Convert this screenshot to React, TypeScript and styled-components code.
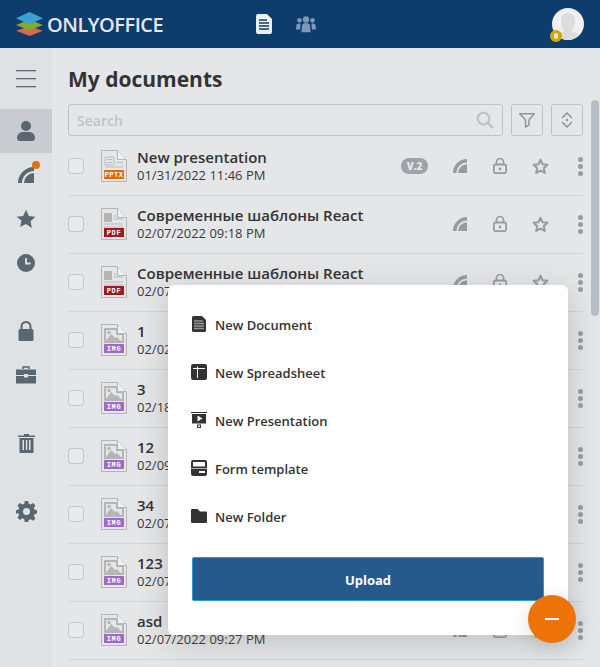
import React from "react";
import styled, { createGlobalStyle } from "styled-components";

const Global = createGlobalStyle`
  html, body { margin: 0; padding: 0; height: 100%; overflow: hidden; background: #e5e6e8; }
  * { box-sizing: border-box; }
  body { font-family: "Open Sans", "Liberation Sans", sans-serif; }
`;

const Page = styled.div`
  position: relative;
  width: 600px;
  height: 667px;
  display: flex;
  flex-direction: column;
  overflow: hidden;
  background: #e5e6e8;
`;
const Header = styled.header`
  height: 48px;
  flex: none;
  background: #0e3c6c;
  display: flex;
  align-items: center;
  padding: 0 16px;
`;
const Brand = styled.div`
  width: 185px;
  display: flex;
  align-items: center;
  gap: 4px;
`;
const BrandName = styled.span`
  font-size: 20px;
  font-weight: 600;
  letter-spacing: -0.5px;
  color: #e4e8ec;
`;
const HeaderNav = styled.nav`
  display: flex;
  align-items: center;
  gap: 20px;
  margin-left: 52px;
`;
const NavIcon = styled.span`
  display: flex;
  width: 22px;
  justify-content: center;
`;
const Avatar = styled.div`
  position: relative;
  margin-left: auto;
  width: 32px;
  height: 32px;
  border-radius: 50%;
  background: #f0f0f0;
`;
const AvatarBadge = styled.span`
  position: absolute;
  left: -2px;
  bottom: -2px;
  width: 12px;
  height: 12px;
  border-radius: 50%;
  background: #d2a800;
  display: flex;
  align-items: center;
  justify-content: center;
  &::after {
    content: "";
    width: 4px;
    height: 6px;
    border-radius: 2px;
    background: #f6efc8;
  }
`;
const Body = styled.div`
  flex: 1;
  display: flex;
  min-height: 0;
`;
const Sidebar = styled.aside`
  width: 52px;
  flex: none;
  background: #dfe2e5;
  display: flex;
  flex-direction: column;
`;
const Burger = styled.div`
  height: 61px;
  display: flex;
  flex-direction: column;
  align-items: center;
  justify-content: center;
  gap: 7px;
  & > span {
    width: 20px;
    height: 1px;
    background: #5f6a74;
    box-shadow: 0 0.5px 0 #8b949c;
  }
`;
const SideItem = styled.div<{ $active?: boolean; $gap?: number }>`
  position: relative;
  height: 44px;
  flex: none;
  margin-top: ${(p) => p.$gap ?? 0}px;
  display: flex;
  align-items: center;
  justify-content: center;
  background: ${(p) => (p.$active ? "#c8ccd0" : "transparent")};
`;
const Dot = styled.span`
  position: absolute;
  top: 8px;
  left: 32px;
  width: 8px;
  height: 8px;
  border-radius: 50%;
  background: #e0720f;
`;
const Main = styled.main`
  flex: 1;
  min-width: 0;
  padding: 0 17px 0 16px;
  display: flex;
  flex-direction: column;
`;
const Title = styled.h1`
  margin: 0;
  height: 56px;
  display: flex;
  align-items: center;
  padding-top: 6px;
  font-size: 21px;
  font-weight: 700;
  color: #333;
`;
const Toolbar = styled.div`
  display: flex;
  gap: 8px;
  height: 32px;
  flex: none;
`;
const SearchBox = styled.div`
  flex: 1;
  border: 1px solid #bcc3cc;
  border-radius: 3px;
  display: flex;
  align-items: center;
  justify-content: space-between;
  padding: 0 8px;
  font-size: 14px;
  font-weight: 600;
  color: #c0c4ca;
`;
const ToolButton = styled.div`
  width: 32px;
  border: 1px solid #bcc3cc;
  border-radius: 3px;
  display: flex;
  align-items: center;
  justify-content: center;
`;
const List = styled.div`
  margin-top: 2px;
  display: flex;
  flex-direction: column;
`;
const Row = styled.div`
  height: 58px;
  flex: none;
  display: flex;
  align-items: center;
  padding-bottom: 1px;
  border-bottom: 1px solid #d4d6d9;
`;
const Check = styled.span`
  width: 16px;
  height: 16px;
  border: 1px solid #c3c9d0;
  border-radius: 3px;
  background: #e8e9eb;
  flex: none;
`;
const FileBox = styled.div`
  width: 26px;
  margin-left: 17px;
  flex: none;
  display: flex;
`;
const Info = styled.div`
  margin-left: 10px;
  flex: 1;
  min-width: 0;
  padding-bottom: 1px;
  color: #333;
`;
const FileName = styled.div`
  font-size: 15px;
  line-height: 18px;
  font-weight: 600;
  white-space: nowrap;
`;
const FileDate = styled.div`
  margin-top: 1px;
  font-size: 13px;
  line-height: 17px;
  color: #3a3a3a;
  white-space: nowrap;
`;
const Badge = styled.span`
  width: 27px;
  height: 16px;
  border-radius: 8px;
  background: #9da3a9;
  color: #e5e6e8;
  font-size: 10px;
  font-weight: 800;
  display: flex;
  align-items: center;
  justify-content: center;
  margin-right: 12px;
  flex: none;
`;
const Action = styled.span`
  width: 40px;
  flex: none;
  display: flex;
  justify-content: center;
  align-items: center;
`;
const Dots = styled.span`
  width: 23px;
  flex: none;
  display: flex;
  flex-direction: column;
  align-items: flex-end;
  gap: 2px;
  & > i {
    width: 5px;
    height: 5px;
    border-radius: 50%;
    background: #969ca3;
  }
`;
const Scrollbar = styled.div`
  position: absolute;
  top: 100px;
  right: 1px;
  width: 8px;
  height: 216px;
  border-radius: 4px;
  background: #b7bec6;
`;
const Popup = styled.div`
  position: absolute;
  left: 168px;
  top: 285px;
  width: 400px;
  height: 350px;
  background: #fff;
  border-radius: 6px;
  padding: 16px 24px 0;
  box-shadow: 0 7px 30px rgba(85, 85, 85, 0.25);
`;
const MenuItem = styled.div`
  height: 48px;
  display: flex;
  align-items: center;
  gap: 8px;
  font-size: 13px;
  font-weight: 600;
  color: #333;
`;
const MenuIcon = styled.span`
  width: 16px;
  display: flex;
  justify-content: center;
  margin-left: -1px;
  position: relative;
  top: -1px;
`;
const Upload = styled.div`
  margin-top: 16px;
  height: 44px;
  padding-top: 1px;
  background: #265a8c;
  border: 1px solid #2a9ad6;
  border-radius: 2px;
  color: #fff;
  font-size: 13px;
  font-weight: 700;
  display: flex;
  align-items: center;
  justify-content: center;
`;
const Fab = styled.div`
  position: absolute;
  left: 528px;
  top: 595px;
  width: 48px;
  height: 48px;
  border-radius: 50%;
  background: #ed7309;
  box-shadow: 0 5px 20px rgba(0, 0, 0, 0.13);
  display: flex;
  align-items: center;
  justify-content: center;
  &::after {
    content: "";
    width: 14px;
    height: 2px;
    background: #fff;
  }
`;

const G = "#5a6771";
const Person = () => (
  <svg width="18" height="20" viewBox="0 0 18 20"><circle cx="9" cy="5" r="5" fill={G} /><path d="M0 17c0-4 3-6 6-6h6c3 0 6 2 6 6 0 2-1 3-3 3H3c-2 0-3-1-3-3z" fill={G} /></svg>
);
const Feed = ({ c = G, s = 16 }: { c?: string; s?: number }) => (
  <svg width={s} height={s} viewBox="0 0 16 16">
    <path d="M0 16A16 16 0 0 1 16 0V4A12 12 0 0 0 4 16Z" fill={c} />
    <path d="M6 16A10 10 0 0 1 16 6V16Z" fill={c} />
  </svg>
);
const Star = () => (
  <svg width="20" height="20" viewBox="0 0 24 24"><path d="M12 1l3.400 7.300 7.900 1-5.800 5.500 1.500 7.900L12 18l-7 3.700 1.500-7.900L.7 9.300l7.900-1z" fill={G} /></svg>
);
const Clock = () => (
  <svg width="18" height="18" viewBox="0 0 18 18"><circle cx="9" cy="9" r="9" fill={G} /><path d="M9 4v5.500h4.500" stroke="#dfe2e5" strokeWidth="1.800" fill="none" /></svg>
);
const Lock = () => (
  <svg width="16" height="20" viewBox="0 0 16 20"><path d="M3.500 9V5.500a4.500 4.500 0 0 1 9 0V9" stroke={G} strokeWidth="2" fill="none" /><rect x="0.500" y="8" width="15" height="12" rx="1.500" fill={G} /></svg>
);
const Case = () => (
  <svg width="20" height="18" viewBox="0 0 20 18"><path d="M7 3V1h6v2" stroke={G} strokeWidth="1.500" fill="none" /><path d="M0 3.500h20V9h-8v-1H8v1H0zM0 10h8v1.500h4V10h8v7.500H0z" fill={G} /></svg>
);
const Trash = () => (
  <svg width="17" height="20" viewBox="0 0 17 20"><path d="M6 1h5v1.500h6V4H0V2.500h6z" fill={G} /><path d="M1.500 5h14v15h-14zM4.500 7v10h1.500V7zM7.800 7v10h1.500V7zM11 7v10h1.500V7z" fill={G} fillRule="evenodd" /></svg>
);
const Gear = () => (
  <svg width="21" height="21" viewBox="0 0 24 24"><path fillRule="evenodd" fill={G} d="M10 0h4l.6 3.200 2.200.9L19.500 2.300 22.300 5l-1.900 2.700.9 2.200L24 10.500v3.900l-2.700.6-.9 2.200 1.900 2.700-2.800 2.800-2.700-1.900-2.200.9L14 24h-4l-.6-3.300-2.200-.9-2.700 1.900-2.800-2.800 1.900-2.700-.9-2.200L0 14.400v-3.900l2.700-.6.900-2.200L1.700 5l2.800-2.700 2.700 1.800 2.200-.9zM12 8a4 4 0 1 0 0 8 4 4 0 0 0 0-8z" /></svg>
);

const Logo = () => (
  <svg width="27" height="24" viewBox="0 0 27 24">
    <path d="M13.500 14.500L0 18.800l13.500 5.200L27 18.800z" fill="#d9694a" />
    <path d="M13.500 7.500L0 13l13.500 5.500L27 13z" fill="#7faa2e" />
    <path d="M13.500 0L0 6.200l13.500 6 13.500-6z" fill="#3aa0d5" />
  </svg>
);
const DocWhite = () => (
  <svg width="16" height="20" viewBox="0 0 16 20">
    <path d="M2 0h9l5 5v13a2 2 0 0 1-2 2H2a2 2 0 0 1-2-2V2a2 2 0 0 1 2-2z" fill="#eef1f4" />
    <path d="M3 6h8M3 9h10M3 12h10M3 15h10" stroke="#0e3c6c" strokeWidth="1.400" />
  </svg>
);
const People = () => (
  <svg width="20" height="18" viewBox="0 0 22 18" fill="#7d99b6">
    <circle cx="11" cy="4" r="3.500" /><circle cx="3.800" cy="5" r="2.500" /><circle cx="18.200" cy="5" r="2.500" />
    <path d="M6 18l.6-7c.2-2 2-3 4.400-3s4.200 1 4.400 3l.6 7z" />
    <path d="M0 15l.4-4.500C.6 9 2 8 4.500 8.500 5 9 5 10 4.900 11l-.4 4zM22 15l-.4-4.500C21.400 9 20 8 17.500 8.500 17 9 17 10 17.100 11l.4 4z" />
  </svg>
);
const Silhouette = () => (
  <svg width="32" height="32" viewBox="0 0 32 32">
    <defs><clipPath id="av"><circle cx="16" cy="16" r="16" /></clipPath></defs>
    <g clipPath="url(#av)"><path d="M16 5c4 0 7 3 7 8s-2 7-3 9c0 2 4 3 8 5v5H4v-5c4-2 8-3 8-5-1-2-3-4-3-9s3-8 7-8z" fill="#dcdcdc" /></g>
  </svg>
);

const SearchIcon = () => (
  <svg width="18" height="18" viewBox="0 0 18 18"><circle cx="7.500" cy="7.500" r="5.800" stroke="#bcc3cc" strokeWidth="2.200" fill="none" /><path d="M12 12l5 5" stroke="#bcc3cc" strokeWidth="2.600" /></svg>
);
const FilterIcon = () => (
  <svg width="16" height="15" viewBox="0 0 16 15"><path d="M.8.800h14.400L10 7v4.800L6.500 14V7z" stroke="#8e969e" strokeWidth="1.500" fill="none" strokeLinejoin="round" /></svg>
);
const SortIcon = () => (
  <svg width="12" height="16" viewBox="0 0 12 16"><path d="M1 6l5-5 5 5M1 10l5 5 5-5" stroke="#8e969e" strokeWidth="1.500" fill="none" /><circle cx="6" cy="8" r="1.200" fill="#8e969e" /></svg>
);
const LockOutline = () => (
  <svg width="14" height="16" viewBox="0 0 14 16"><path d="M3.500 6.500V4a3.500 3.500 0 0 1 7 0v2.500" stroke="#969ca3" strokeWidth="1.700" fill="none" /><rect x="0.900" y="6.500" width="12.200" height="8.600" rx="1.500" stroke="#969ca3" strokeWidth="1.800" fill="none" /><circle cx="7" cy="11" r="1.400" fill="#969ca3" /></svg>
);
const StarOutline = () => (
  <svg width="17" height="17" viewBox="0 0 24 24"><path d="M12 2.500l2.900 6.300 6.900.8-5.100 4.700 1.400 6.800-6.100-3.400-6.100 3.400 1.400-6.800-5.100-4.700 6.900-.8z" stroke="#969ca3" strokeWidth="2.900" fill="none" strokeLinejoin="round" /></svg>
);

type Kind = "pptx" | "pdf" | "img";
const labelFill: Record<Kind, string> = { pptx: "#e06a06", pdf: "#9a1a1f", img: "#9b6bcc" };
const labelText: Record<Kind, string> = { pptx: "PPTX", pdf: "PDF", img: "IMG" };
const FileIcon = ({ kind }: { kind: Kind }) => (
  <svg width="26" height="32" viewBox="0 0 26 32">
    <path d="M.5.500h16l9 9v22H.5z" fill="#e5e6e8" stroke="#b5b5b5" />
    <path d="M16.500.500v9h9" fill="#efefef" stroke="#b5b5b5" />
    {kind === "pptx" && (
      <path d="M4 7h9v8H4zM6 9.500h5M6 12.500h5M15 12.500h7M4 17h18" stroke="#bcbcbc" strokeWidth="1" fill="none" />
    )}
    {kind === "pdf" && (
      <>
        <rect x="3" y="5" width="8" height="9" fill="#b5b5b5" />
        <path d="M13 8h2M13 11h9M3 16h19M3 19h19" stroke="#b5b5b5" strokeWidth="1" fill="none" />
      </>
    )}
    {kind === "img" && (
      <>
        <path d="M4 5h12v5h6v8H4z" fill="none" stroke="#b5b5b5" strokeWidth="2" />
        <path d="M5 17l5-7 4 4 2-1 4 4z" fill="#b5b5b5" />
        <circle cx="8" cy="8.500" r="1.700" fill="#b5b5b5" />
      </>
    )}
    <rect x="3" y="20" width="20" height="9" fill={labelFill[kind]} />
    <text x="13" y="27.300" textAnchor="middle" fontSize="7" fontFamily="Liberation Mono, monospace" fontWeight="700" fill="#fff" letterSpacing="0.6">{labelText[kind]}</text>
  </svg>
);

const rows: { name: string; date: string; kind: Kind; version?: string }[] = [
  { name: "New presentation", date: "01/31/2022 11:46 PM", kind: "pptx", version: "V.2" },
  { name: "Современные шаблоны React", date: "02/07/2022 09:18 PM", kind: "pdf" },
  { name: "Современные шаблоны React", date: "02/07/2022 09:16 PM", kind: "pdf" },
  { name: "1", date: "02/02/2022 10:12 AM", kind: "img" },
  { name: "3", date: "02/18/2022 02:40 PM", kind: "img" },
  { name: "12", date: "02/09/2022 04:05 PM", kind: "img" },
  { name: "34", date: "02/07/2022 09:31 PM", kind: "img" },
  { name: "123", date: "02/07/2022 09:29 PM", kind: "img" },
  { name: "asd", date: "02/07/2022 09:27 PM", kind: "img" },
];

const DocMenu = () => (
  <svg width="14" height="16" viewBox="0 0 14 16"><path d="M1.500 0H10l4 4v10.500a1.500 1.500 0 0 1-1.500 1.500h-11A1.500 1.500 0 0 1 0 14.500v-13A1.500 1.500 0 0 1 1.500 0z" fill="#333" /><path d="M2 5h9M2 7.500h10M2 10h10M2 12.500h10" stroke="#999" strokeWidth="1.300" /></svg>
);
const SheetMenu = () => (
  <svg width="16" height="16" viewBox="0 0 16 16"><rect width="16" height="16" rx="2" fill="#333" /><path d="M2 4.500h12M6.500 2.500V14" stroke="#fff" strokeWidth="1" /></svg>
);
const SlideMenu = () => (
  <svg width="16" height="16" viewBox="0 0 16 16"><path d="M0 .500h16" stroke="#333" /><rect x="1" y="2" width="14" height="9.500" fill="#333" /><path d="M6.500 3.500l5 3-5 3z" fill="#fff" /><rect x="6.500" y="13" width="3" height="2.500" fill="#fff" stroke="#333" /></svg>
);
const FormMenu = () => (
  <svg width="16" height="16" viewBox="0 0 16 16"><rect width="16" height="16" rx="2" fill="#333" /><rect x="2" y="2" width="12" height="4.500" fill="#fff" /><rect x="8" y="11" width="6" height="2" fill="#fff" /><path d="M0 8.500h16" stroke="#fff" strokeWidth="0.600" /></svg>
);
const FolderMenu = () => (
  <svg width="16" height="14" viewBox="0 0 16 14"><path d="M1 0h5.500L9 2.500h6a1 1 0 0 1 1 1V13a1 1 0 0 1-1 1H1a1 1 0 0 1-1-1V1a1 1 0 0 1 1-1z" fill="#333" /></svg>
);

const menu = [
  { label: "New Document", icon: <DocMenu /> },
  { label: "New Spreadsheet", icon: <SheetMenu /> },
  { label: "New Presentation", icon: <SlideMenu /> },
  { label: "Form template", icon: <FormMenu /> },
  { label: "New Folder", icon: <FolderMenu /> },
];

export default function App() {
  return (
    <Page>
      <Global />
      <Header>
        <Brand>
          <Logo />
          <BrandName>ONLYOFFICE</BrandName>
        </Brand>
        <HeaderNav>
          <NavIcon><DocWhite /></NavIcon>
          <NavIcon><People /></NavIcon>
        </HeaderNav>
        <Avatar>
          <Silhouette />
          <AvatarBadge />
        </Avatar>
      </Header>
      <Body>
        <Sidebar>
          <Burger><span /><span /><span /></Burger>
          <SideItem $active><Person /></SideItem>
          <SideItem><Feed /><Dot /></SideItem>
          <SideItem><Star /></SideItem>
          <SideItem><Clock /></SideItem>
          <SideItem $gap={24}><Lock /></SideItem>
          <SideItem><Case /></SideItem>
          <SideItem $gap={24}><Trash /></SideItem>
          <SideItem $gap={24}><Gear /></SideItem>
        </Sidebar>
        <Main>
          <Title>My documents</Title>
          <Toolbar>
            <SearchBox>Search<SearchIcon /></SearchBox>
            <ToolButton><FilterIcon /></ToolButton>
            <ToolButton><SortIcon /></ToolButton>
          </Toolbar>
          <List>
            {rows.map((r, i) => (
              <Row key={i}>
                <Check />
                <FileBox><FileIcon kind={r.kind} /></FileBox>
                <Info>
                  <FileName>{r.name}</FileName>
                  <FileDate>{r.date}</FileDate>
                </Info>
                {r.version && <Badge>{r.version}</Badge>}
                <Action><Feed c="#969ca3" s={14} /></Action>
                <Action><LockOutline /></Action>
                <Action><StarOutline /></Action>
                <Dots><i /><i /><i /></Dots>
              </Row>
            ))}
          </List>
        </Main>
      </Body>
      <Scrollbar />
      <Popup>
        {menu.map((m) => (
          <MenuItem key={m.label}>
            <MenuIcon>{m.icon}</MenuIcon>
            {m.label}
          </MenuItem>
        ))}
        <Upload>Upload</Upload>
      </Popup>
      <Fab />
    </Page>
  );
}
